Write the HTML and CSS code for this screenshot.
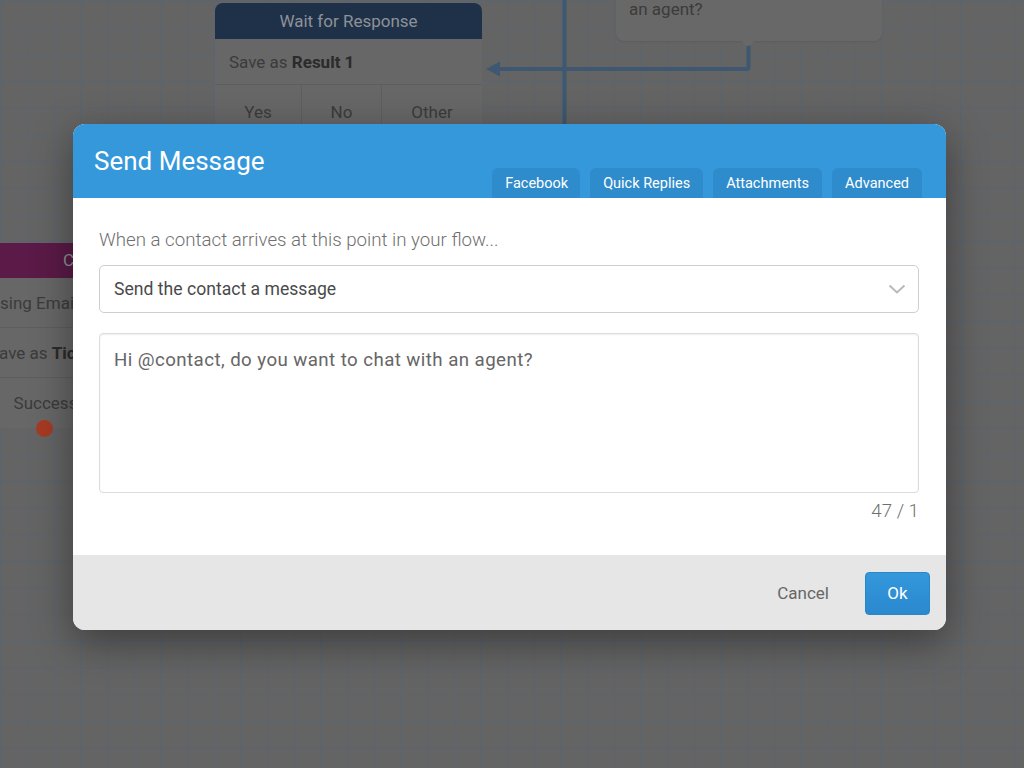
FILE: index.html
```html
<!DOCTYPE html>
<html lang="en">
<head>
<meta charset="UTF-8">
<title>Send Message</title>
<link rel="stylesheet" href="styles.css">
</head>
<body>

    <section class="canvas">
        <!-- linhas de conexao -->
        <svg class="wires" width="1024" height="768" viewBox="0 0 1024 768">
            <path d="M564.5 0 V130" stroke="#3d5870" stroke-width="4" fill="none"/>
            <path d="M748.5 44 V67 a2 2 0 0 1 -2 2 H498" stroke="#3d5870" stroke-width="4" fill="none"/>
            <path d="M486 69 L500 61.5 L500 76.5 Z" fill="#3d5870"/>
        </svg>

        <div class="node node-wait">
            <div class="node-head">Wait for Response</div>
            <div class="node-row">Save as <b>Result 1</b></div>
            <div class="node-exits">
                <div class="exit exit-yes">Yes</div>
                <div class="exit exit-no">No</div>
                <div class="exit exit-other">Other</div>
            </div>
        </div>

        <div class="node node-msg">
            <div class="node-text">Hi @contact, do you<br>want to chat with<br>an agent?</div>
            <span class="node-port"></span>
        </div>

        <div class="node node-ticket">
            <div class="node-head">Create Ticket</div>
            <div class="node-row">Using Email</div>
            <div class="node-row">Save as <b>Ticket</b></div>
            <div class="node-exits">
                <div class="exit exit-half">Success<span class="dot"></span></div>
                <div class="exit exit-half">Failure</div>
            </div>
        </div>
    </section>

    <div class="modal">
        <div class="modal-header">
            <h1 class="modal-title">Send Message</h1>
            <div class="tabs">
                <span class="tab">Facebook</span>
                <span class="tab">Quick Replies</span>
                <span class="tab">Attachments</span>
                <span class="tab">Advanced</span>
            </div>
        </div>

        <div class="modal-body">
            <p class="intro">When a contact arrives at this point in your flow...</p>

            <div class="select">
                <span>Send the contact a message</span>
                <svg class="chevron" width="18" height="11" viewBox="0 0 18 11">
                    <path d="M1.5 1.5 L9 8.5 L16.5 1.5" stroke="#b9b9b9" stroke-width="2" fill="none"/>
                </svg>
            </div>

            <textarea class="message">Hi @contact, do you want to chat with an agent?</textarea>
            <div class="counter">47 / 1</div>
        </div>

        <div class="modal-footer">
            <button class="btn-cancel">Cancel</button>
            <button class="btn-ok">Ok</button>
        </div>
    </div>

</body>
</html>
```

FILE: styles.css
```css
    *{
        margin: 0;
        box-sizing: border-box;
    }

    body{
        width: 1024px;
        height: 768px;
        overflow: hidden;
        font-family: Roboto, "Liberation Sans", sans-serif;
        background-color: #646464;
    }

    /* fundo do editor, ja escurecido pelo modal */
    .canvas{
        position: relative;
        width: 1024px;
        height: 768px;
        overflow: hidden;
        background-color: #646464;
        background-image:
            linear-gradient(to right, #5a646f 1px, transparent 1px),
            linear-gradient(to bottom, #5a646f 1px, transparent 1px);
        background-size: 26.67px 26.67px;
        background-position: 0.5px 0.5px;
    }

    .wires{
        position: absolute;
        top: 0;
        left: 0;
    }

    .node{
        position: absolute;
        background: #676767;
        color: #3b3b3b;
        font-size: 17px;
    }

    .node b{
        color: #2b2b2b;
    }

    .node-head{
        height: 36px;
        line-height: 36px;
        color: #8d9298;
    }

    .node-row{
        border-bottom: 1px solid #5e5e5e;
        padding-left: 14px;
    }

    .node-exits{
        display: flex;
    }

    .exit{
        text-align: center;
        position: relative;
    }

    /* Wait for Response */
    .node-wait{
        left: 215px;
        top: 3px;
        width: 267px;
        border-radius: 8px 8px 0 0;
    }

    .node-wait .node-head{
        background: #1f3148;
        text-align: center;
        border-radius: 8px 8px 0 0;
    }

    .node-wait .node-row{
        height: 46px;
        line-height: 46px;
    }

    .node-wait .exit{
        height: 60px;
        padding-top: 16px;
        line-height: 22px;
        border-right: 1px solid #5e5e5e;
    }

    .exit-yes{ width: 87px; }
    .exit-no{ width: 80px; }
    .exit-other{ width: 100px; border-right: none !important; }

    /* caixa da mensagem no topo */
    .node-msg{
        left: 616px;
        top: -63px;
        width: 266px;
        height: 104px;
        border-radius: 8px;
        background: #686868;
        box-shadow: 0 1px 2px rgba(0, 0, 0, 0.08);
    }

    .node-text{
        padding: 12px 13px 20px;
        line-height: 24px;
    }

    .node-port{
        position: absolute;
        left: 126px;
        bottom: -5px;
        width: 12px;
        height: 12px;
        border-radius: 50%;
        background: #686868;
    }

    /* Create Ticket, quase todo atras do modal */
    .node-ticket{
        left: -25px;
        top: 243px;
        width: 282px;
    }

    .node-ticket .node-head{
        height: 35px;
        line-height: 35px;
        background: #5b1a47;
        padding-left: 88px;
    }

    .node-ticket .node-row{
        height: 50px;
        line-height: 50px;
    }

    .node-ticket .node-row:first-of-type{
        height: 52px;
        line-height: 52px;
    }

    .exit-half{
        width: 50%;
        height: 50px;
        padding-top: 14px;
        line-height: 22px;
    }

    .dot{
        position: absolute;
        left: 61px;
        top: 42px;
        width: 17px;
        height: 17px;
        border-radius: 50%;
        background: #a63a23;
    }

    /* modal */
    .modal{
        position: absolute;
        left: 73px;
        top: 124px;
        width: 873px;
        border-radius: 12px;
        overflow: hidden;
        background: white;
        box-shadow: 0 12px 40px rgba(0, 0, 0, 0.4);
    }

    .modal-header{
        height: 74px;
        background: #3498db;
        display: flex;
        justify-content: space-between;
        align-items: flex-end;
        padding: 0 24px 0 21px;
    }

    .modal-title{
        align-self: flex-start;
        margin-top: 21px;
        font-size: 26px;
        font-weight: 400;
        line-height: 32px;
        color: white;
    }

    .tabs{
        display: flex;
        gap: 10px;
    }

    .tab{
        height: 30px;
        line-height: 31px;
        padding: 0 13px;
        font-size: 14.5px;
        color: white;
        background: #2f8ccc;
        border-radius: 6px 6px 0 0;
    }

    .tab:first-child{
        padding: 0 12px 0 13px;
    }

    .modal-body{
        padding: 30px 27px 32px 26px;
    }

    .intro{
        font-size: 18.7px;
        line-height: 24px;
        font-weight: 300;
        color: #6f6f6f;
        margin-bottom: 13px;
    }

    .select{
        height: 48px;
        border: 1px solid #cfcfcf;
        border-radius: 5px;
        display: flex;
        align-items: center;
        justify-content: space-between;
        padding: 0 12px 0 14px;
        font-size: 17.6px;
        color: #4a4a4a;
    }

    .chevron{
        margin-top: 1px;
    }

    .message{
        display: block;
        width: 100%;
        height: 160px;
        margin-top: 20px;
        padding: 14px 14px;
        border: 1px solid #dcdcdc;
        border-radius: 4px;
        box-shadow: inset 0 1px 2px rgba(0, 0, 0, 0.07);
        font-family: Roboto, "Liberation Sans", sans-serif;
        font-size: 18.7px;
        letter-spacing: 0.43px;
        line-height: 24px;
        color: #666;
        resize: none;
        outline: none;
    }

    .counter{
        text-align: right;
        margin-top: 6px;
        font-size: 18.7px;
        line-height: 24px;
        font-weight: 300;
        color: #707070;
    }

    .modal-footer{
        height: 75px;
        background: #e6e6e6;
        display: flex;
        align-items: center;
        justify-content: flex-end;
        gap: 36px;
        padding-right: 16px;
    }

    .btn-cancel{
        background: none;
        border: none;
        font-family: Roboto, "Liberation Sans", sans-serif;
        font-size: 17px;
        color: #666;
        padding: 0;
        margin-top: 1px;
        cursor: pointer;
    }

    .btn-ok{
        width: 65px;
        height: 43px;
        margin-top: 1px;
        border: 1px solid #2b86c8;
        border-radius: 4px;
        background: linear-gradient(180deg, #3498db 0%, #2a88cf 100%);
        color: white;
        font-family: Roboto, "Liberation Sans", sans-serif;
        font-size: 17px;
        cursor: pointer;
    }
```
